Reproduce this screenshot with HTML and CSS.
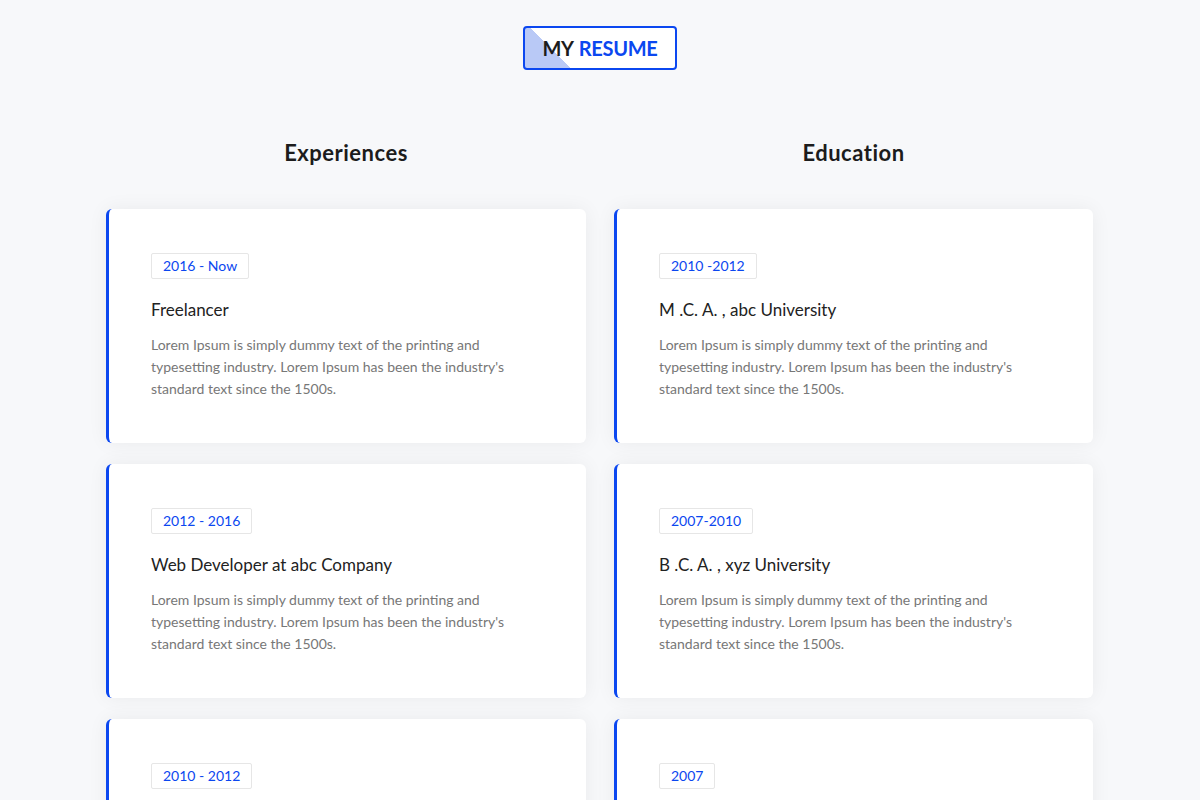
FILE: index.html
```html
<!DOCTYPE html>
<html lang="en">
<head>
    <meta charset="UTF-8">
    <meta name="viewport" content="width=device-width, initial-scale=1.0">
    <title>My Resume</title>
    <link rel="stylesheet" href="styles.css">
</head>
<body>

    <section class="resume-section">
        <!-- Section Title -->
        <div class="section-title">
            <h2 class="title-box">MY <span>RESUME</span></h2>
        </div>

        <div class="resume-columns">
            <!-- Experiences -->
            <div class="resume-col">
                <h3 class="col-title">Experiences</h3>

                <div class="resume-card">
                    <span class="resume-date">2016 - Now</span>
                    <h4 class="resume-name">Freelancer</h4>
                    <p class="resume-text">Lorem Ipsum is simply dummy text of the printing and typesetting industry. Lorem Ipsum has been the industry's standard text since the 1500s.</p>
                </div>

                <div class="resume-card">
                    <span class="resume-date">2012 - 2016</span>
                    <h4 class="resume-name">Web Developer at abc Company</h4>
                    <p class="resume-text">Lorem Ipsum is simply dummy text of the printing and typesetting industry. Lorem Ipsum has been the industry's standard text since the 1500s.</p>
                </div>

                <div class="resume-card">
                    <span class="resume-date">2010 - 2012</span>
                    <h4 class="resume-name">Web Designer at xyz Company</h4>
                    <p class="resume-text">Lorem Ipsum is simply dummy text of the printing and typesetting industry. Lorem Ipsum has been the industry's standard text since the 1500s.</p>
                </div>
            </div>

            <!-- Education -->
            <div class="resume-col">
                <h3 class="col-title">Education</h3>

                <div class="resume-card">
                    <span class="resume-date">2010 -2012</span>
                    <h4 class="resume-name">M .C. A. , abc University</h4>
                    <p class="resume-text">Lorem Ipsum is simply dummy text of the printing and typesetting industry. Lorem Ipsum has been the industry's standard text since the 1500s.</p>
                </div>

                <div class="resume-card">
                    <span class="resume-date">2007-2010</span>
                    <h4 class="resume-name">B .C. A. , xyz University</h4>
                    <p class="resume-text">Lorem Ipsum is simply dummy text of the printing and typesetting industry. Lorem Ipsum has been the industry's standard text since the 1500s.</p>
                </div>

                <div class="resume-card">
                    <span class="resume-date">2007</span>
                    <h4 class="resume-name">Higher Secondary School</h4>
                    <p class="resume-text">Lorem Ipsum is simply dummy text of the printing and typesetting industry. Lorem Ipsum has been the industry's standard text since the 1500s.</p>
                </div>
            </div>
        </div>
    </section>

</body>
</html>
```

FILE: styles.css
```css
body {
    font-family: Lato, "Noto Sans", sans-serif;
    margin: 0;
    padding: 0;
    background-color: #f7f8fa;
    color: #222;
}

.resume-section {
    padding-top: 26px;
}

/* Title Styling */
.section-title {
    display: flex;
    justify-content: center;
}

.title-box {
    margin: 0;
    width: 150px;
    height: 40px;
    box-sizing: content-box;
    display: flex;
    justify-content: center;
    align-items: center;
    font-size: 20px;
    font-weight: 700;
    letter-spacing: -0.3px;
    color: #1c1c1c;
    border: 2px solid #0b47f0;
    border-radius: 4px;
    background: linear-gradient(45deg, #b9c9f6 32px, #ffffff 32px);
}

.title-box span {
    color: #0b47f0;
    margin-left: 5px;
}

.resume-columns {
    margin: 70px 0 0 106px;
    display: grid;
    grid-template-columns: 480px 479px;
    gap: 28px;
}

.col-title {
    margin: 0 0 43px;
    text-align: center;
    font-size: 22px;
    line-height: 26px;
    font-weight: 700;
    letter-spacing: 0.5px;
    color: #1c1c1c;
}

.resume-card {
    background-color: #fff;
    border-left: 3px solid #0b47f0;
    border-radius: 6px;
    box-shadow: 0 0 20px rgba(0, 0, 0, 0.06);
    padding: 44px 60px 43px 42px;
    margin-bottom: 21px;
}

.resume-date {
    display: inline-block;
    font-size: 14px;
    line-height: 20px;
    color: #0b47f0;
    border: 1px solid #e6e6e6;
    border-radius: 2px;
    padding: 2px 11px;
}

.resume-name {
    margin: 20px 0 0;
    font-size: 17px;
    line-height: 22px;
    font-weight: 400;
    color: #222;
}

.resume-text {
    margin: 13px 0 0;
    font-size: 14px;
    line-height: 22px;
    color: #777;
}
```
